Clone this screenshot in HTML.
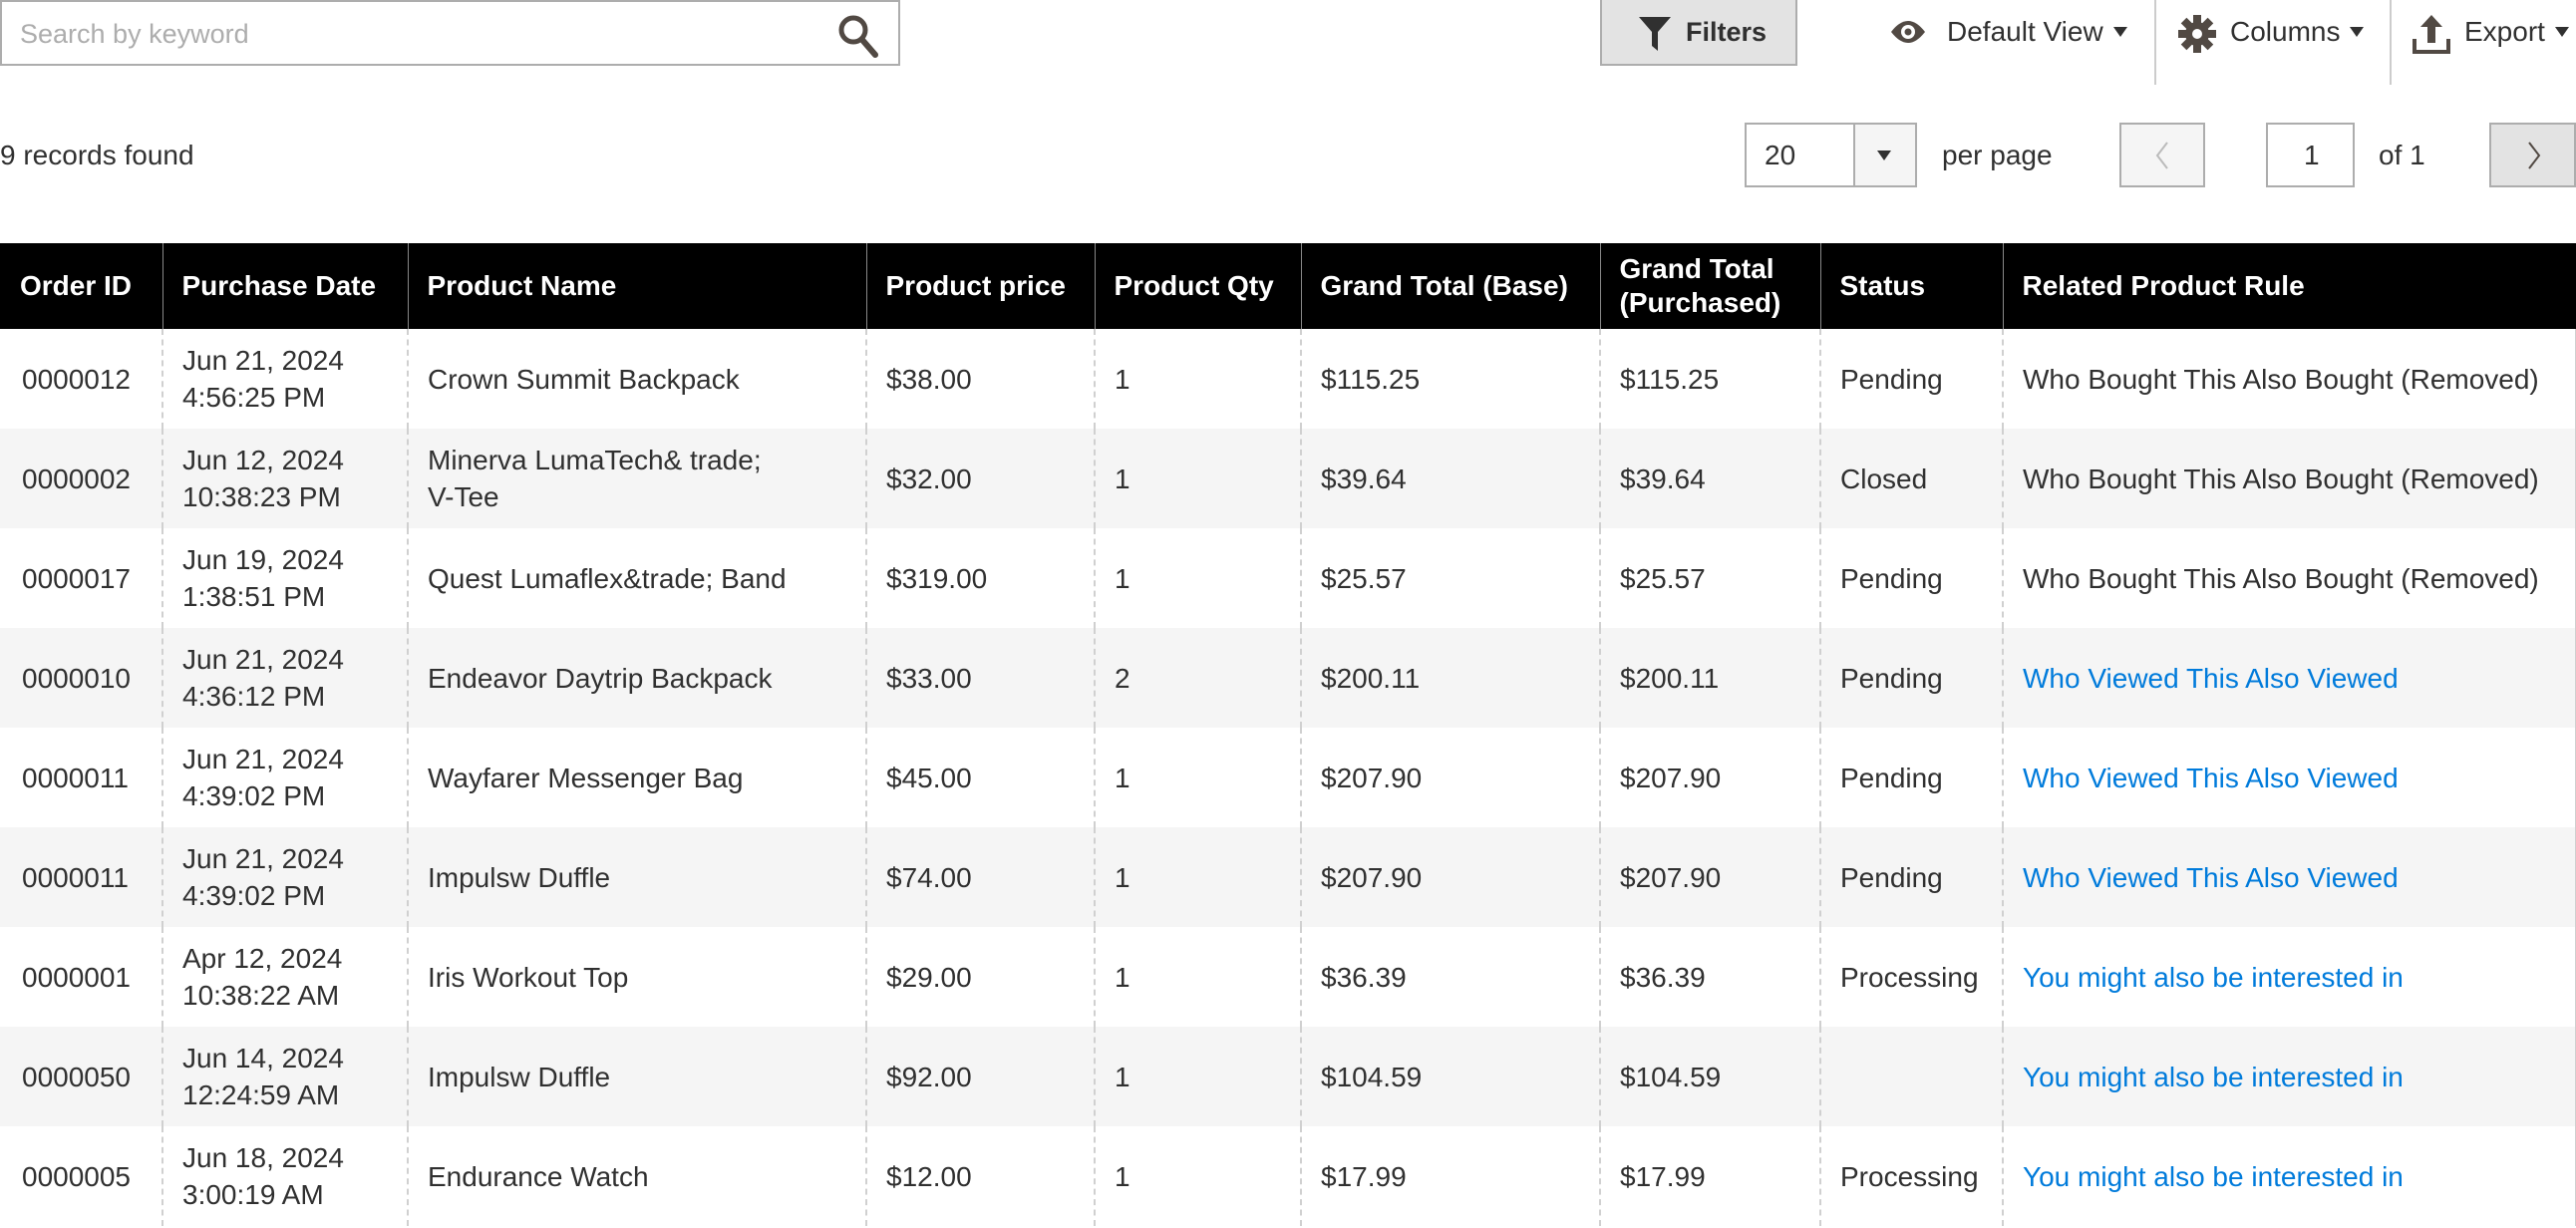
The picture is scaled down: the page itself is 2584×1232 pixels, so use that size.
<!DOCTYPE html>
<html><head><meta charset="utf-8"><style>
*{box-sizing:border-box;margin:0;padding:0}
body{width:2584px;height:1232px;background:#fff;font-family:"Liberation Sans",sans-serif;color:#303030;position:relative;overflow:hidden}
.abs{position:absolute}
.search{left:0;top:0;width:903px;height:66px;border:2px solid #adadad;background:#fff}
.search span{position:absolute;left:18px;top:17px;font-size:27px;color:#adadad}
.filters{left:1605px;top:0;width:198px;height:66px;background:#e3e3e3;border:2px solid #adadad;border-top:none;font-weight:bold;font-size:27px;color:#303030}
.tb{top:16px;font-size:28px;color:#303030}
.sep{top:0;width:2px;height:85px;background:#ccc}
.tri{display:inline-block;width:0;height:0;border-left:7px solid transparent;border-right:7px solid transparent;border-top:10px solid #303030;vertical-align:middle;margin-left:10px;margin-top:-4px}
.box{border:2px solid #adadad;background:#fff}
table{position:absolute;left:0;top:244px;width:2584px;border-collapse:collapse;table-layout:fixed;font-size:28px}
th{background:#000;color:#fff;text-align:left;font-weight:bold;height:86px;padding:0 19px;line-height:34px;border-left:1px solid #888}
th:first-child{border-left:none;padding-left:20px}
td{height:100px;padding:0 19px;line-height:37px;border-left:2px dashed #d0d0d0;vertical-align:middle}
td:first-child{border-left:none;padding-left:22px}
td:last-child{border-right:2px solid #d0d0d0}
tr:nth-child(odd) td{background:#f5f5f5}
a{color:#007bdb;text-decoration:none}
</style></head><body>
<div class="abs search"><span>Search by keyword</span>
<svg style="position:absolute;left:838px;top:12px" width="42" height="44" viewBox="0 0 42 44"><circle cx="16" cy="16" r="12" fill="none" stroke="#514943" stroke-width="5"/><line x1="25" y1="26" x2="38" y2="41" stroke="#514943" stroke-width="6" stroke-linecap="round"/></svg></div>
<div class="abs filters">
<svg style="position:absolute;left:36px;top:16px" width="34" height="36" viewBox="0 0 34 36"><path d="M1 1H33L20 16V35L14 30V16Z" fill="#303030"/></svg>
<span style="position:absolute;left:84px;top:17px">Filters</span></div>
<svg class="abs" style="left:1897px;top:17px" width="34" height="30" viewBox="0 0 34 30"><path d="M0 15Q17 -7 34 15Q17 37 0 15Z" fill="#514943"/><circle cx="17" cy="15" r="7" fill="#fff"/><circle cx="17" cy="15" r="3.5" fill="#514943"/></svg>
<div class="abs tb" style="left:1953px">Default View<span class="tri"></span></div>
<div class="abs sep" style="left:2161px"></div>
<svg class="abs" style="left:2185px;top:15px" width="38" height="38" viewBox="-19 -19 38 38"><g fill="#514943"><circle r="12"/><rect x="-4" y="-19" width="8" height="38"/><rect x="-4" y="-19" width="8" height="38" transform="rotate(45)"/><rect x="-4" y="-19" width="8" height="38" transform="rotate(90)"/><rect x="-4" y="-19" width="8" height="38" transform="rotate(135)"/></g><circle r="5" fill="#fff"/></svg>
<div class="abs tb" style="left:2237px">Columns<span class="tri"></span></div>
<div class="abs sep" style="left:2397px"></div>
<svg class="abs" style="left:2420px;top:15px" width="38" height="40" viewBox="0 0 38 40"><path d="M19 0L30 12H23V28H15V12H8Z" fill="#514943"/><path d="M2 24V37H36V24" fill="none" stroke="#514943" stroke-width="4"/></svg>
<div class="abs tb" style="left:2472px">Export<span class="tri"></span></div>

<div class="abs" style="left:0;top:140px;font-size:28px">9 records found</div>
<div class="abs box" style="left:1750px;top:123px;width:173px;height:65px"><span style="position:absolute;left:18px;top:15px;font-size:28px">20</span><div style="position:absolute;left:107px;top:0;width:62px;height:61px;background:#f5f5f5;border-left:2px solid #adadad"><span class="tri" style="position:absolute;left:22px;top:26px;margin:0"></span></div></div>
<div class="abs" style="left:1948px;top:140px;font-size:28px">per page</div>
<div class="abs box" style="left:2126px;top:123px;width:86px;height:65px;background:#f5f5f5"><svg style="position:absolute;left:33px;top:16px" width="16" height="30"><path d="M13 2L3 15L13 28" fill="none" stroke="#bbb" stroke-width="2"/></svg></div>
<div class="abs box" style="left:2273px;top:123px;width:89px;height:65px"><span style="position:absolute;left:36px;top:15px;font-size:28px">1</span></div>
<div class="abs" style="left:2386px;top:140px;font-size:28px">of 1</div>
<div class="abs box" style="left:2497px;top:123px;width:87px;height:65px;background:#e3e3e3"><svg style="position:absolute;left:35px;top:16px" width="16" height="30"><path d="M3 2L13 15L3 28" fill="none" stroke="#514943" stroke-width="2"/></svg></div>

<table>
<colgroup><col style="width:163px"><col style="width:246px"><col style="width:460px"><col style="width:229px"><col style="width:207px"><col style="width:300px"><col style="width:221px"><col style="width:183px"><col style="width:575px"></colgroup>
<tr><th>Order ID</th><th>Purchase Date</th><th>Product Name</th><th>Product price</th><th>Product Qty</th><th>Grand Total (Base)</th><th>Grand Total (Purchased)</th><th>Status</th><th>Related Product Rule</th></tr>
<tr><td>0000012</td><td>Jun 21, 2024<br>4:56:25 PM</td><td>Crown Summit Backpack</td><td>$38.00</td><td>1</td><td>$115.25</td><td>$115.25</td><td>Pending</td><td>Who Bought This Also Bought (Removed)</td></tr>
<tr><td>0000002</td><td>Jun 12, 2024<br>10:38:23 PM</td><td>Minerva LumaTech&amp; trade;<br>V-Tee</td><td>$32.00</td><td>1</td><td>$39.64</td><td>$39.64</td><td>Closed</td><td>Who Bought This Also Bought (Removed)</td></tr>
<tr><td>0000017</td><td>Jun 19, 2024<br>1:38:51 PM</td><td>Quest Lumaflex&amp;trade; Band</td><td>$319.00</td><td>1</td><td>$25.57</td><td>$25.57</td><td>Pending</td><td>Who Bought This Also Bought (Removed)</td></tr>
<tr><td>0000010</td><td>Jun 21, 2024<br>4:36:12 PM</td><td>Endeavor Daytrip Backpack</td><td>$33.00</td><td>2</td><td>$200.11</td><td>$200.11</td><td>Pending</td><td><a>Who Viewed This Also Viewed</a></td></tr>
<tr><td>0000011</td><td>Jun 21, 2024<br>4:39:02 PM</td><td>Wayfarer Messenger Bag</td><td>$45.00</td><td>1</td><td>$207.90</td><td>$207.90</td><td>Pending</td><td><a>Who Viewed This Also Viewed</a></td></tr>
<tr><td>0000011</td><td>Jun 21, 2024<br>4:39:02 PM</td><td>Impulsw Duffle</td><td>$74.00</td><td>1</td><td>$207.90</td><td>$207.90</td><td>Pending</td><td><a>Who Viewed This Also Viewed</a></td></tr>
<tr><td>0000001</td><td>Apr 12, 2024<br>10:38:22 AM</td><td>Iris Workout Top</td><td>$29.00</td><td>1</td><td>$36.39</td><td>$36.39</td><td>Processing</td><td><a>You might also be interested in</a></td></tr>
<tr><td>0000050</td><td>Jun 14, 2024<br>12:24:59 AM</td><td>Impulsw Duffle</td><td>$92.00</td><td>1</td><td>$104.59</td><td>$104.59</td><td></td><td><a>You might also be interested in</a></td></tr>
<tr><td>0000005</td><td>Jun 18, 2024<br>3:00:19 AM</td><td>Endurance Watch</td><td>$12.00</td><td>1</td><td>$17.99</td><td>$17.99</td><td>Processing</td><td><a>You might also be interested in</a></td></tr>
</table>
</body></html>
